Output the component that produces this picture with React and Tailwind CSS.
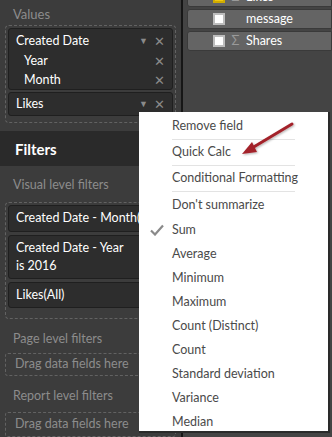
import React from "react";

const font = { fontFamily: 'Lato, "Noto Sans", sans-serif' };

function FieldRow({ label, checked, sigma }) {
  return (
    <div className="h-[20px] mb-[2px] flex items-center bg-[#646464] border border-[#3a3a3a] rounded-l-[3px]">
      <div className="w-[25px] shrink-0" />
      <div
        className={
          "w-[12px] h-[12px] shrink-0 border-2 " +
          (checked ? "bg-[#f2c80f] border-[#d0ac00]" : "bg-white border-[#bdbdbd]")
        }
      />
      <div className="w-[21px] shrink-0 text-center text-[13px] text-[#9a9a9a]">{sigma ? "Σ" : "\u00a0"}</div>
      <div className="text-[12.5px] text-white">{label}</div>
    </div>
  );
}

function Card({ children }) {
  return (
    <div className="bg-[#2d2d2d] border border-[#1f1f1f] rounded-[3px] px-[7px] text-[12.5px] text-white leading-[18px]">
      {children}
    </div>
  );
}

function Tools() {
  return (
    <div className="flex items-center gap-[6px] text-[#8a8a8a]">
      <span className="text-[9px]">▼</span>
      <span className="text-[13px] leading-none">✕</span>
    </div>
  );
}

const topItems = ["Remove field", "Quick Calc", "Conditional Formatting", "Don't summarize"];
const aggItems = [
  "Sum",
  "Average",
  "Minimum",
  "Maximum",
  "Count (Distinct)",
  "Count",
  "Standard deviation",
  "Variance",
  "Median",
];

export default function App() {
  return (
    <div className="relative w-[332px] h-[437px] overflow-hidden flex bg-[#444444]" style={font}>
      {/* Left pane */}
      <div className="w-[181px] h-full bg-[#3c3c3c] flex flex-col shrink-0">
        <div className="px-[13px] pt-[5px] h-[26px] text-[13px] text-[#8c8c8c]">Values</div>
        <div className="mx-[5px] border border-dashed border-[#626262] rounded-[4px] px-[2px] pt-[2px] pb-[6px] flex flex-col gap-[2px]">
          <Card>
            <div className="flex items-center justify-between h-[22px] pt-[2px]">
              <span>Created Date</span>
              <Tools />
            </div>
            <div className="flex items-center justify-between h-[19px] pl-[8px]">
              <span>Year</span>
              <span className="text-[13px] text-[#8a8a8a]">✕</span>
            </div>
            <div className="flex items-center justify-between h-[19px] pl-[8px]">
              <span>Month</span>
              <span className="text-[13px] text-[#8a8a8a]">✕</span>
            </div>
          </Card>
          <Card>
            <div className="flex items-center justify-between h-[22px]">
              <span>Likes</span>
              <Tools />
            </div>
          </Card>
        </div>
        <div className="mt-[8px] h-[36px] bg-[#2a2a2a] flex items-center px-[15px] text-[15px] font-bold text-white">
          Filters
        </div>
        <div className="px-[13px] pt-[10px] h-[36px] text-[12.5px] text-[#8c8c8c]">Visual level filters</div>
        <div className="mx-[5px] border border-dashed border-[#626262] rounded-[4px] px-[2px] pt-[2px] pb-[10px] flex flex-col gap-[3px]">
          <Card>
            <div className="h-[25px] flex items-center whitespace-nowrap">Created Date - Month(All)</div>
          </Card>
          <Card>
            <div className="py-[3px] leading-[18px]">
              Created Date - Year
              <br />
              is 2016
            </div>
          </Card>
          <Card>
            <div className="h-[24px] flex items-center">Likes(All)</div>
          </Card>
        </div>
        <div className="px-[13px] pt-[11px] h-[35px] text-[12.5px] text-[#8c8c8c]">Page level filters</div>
        <div className="mx-[5px] h-[24px] border border-dashed border-[#626262] rounded-[3px] px-[9px] flex items-center text-[12.5px] text-[#8c8c8c]">
          Drag data fields here
        </div>
        <div className="px-[13px] pt-[11px] h-[36px] text-[12.5px] text-[#8c8c8c]">Report level filters</div>
        <div className="mx-[5px] h-[26px] border border-dashed border-[#626262] rounded-[3px] px-[9px] flex items-center text-[12.5px] text-[#8c8c8c]">
          Drag data fields here
        </div>
      </div>
      <div className="w-[2px] h-full bg-[#161616] shrink-0" />

      {/* Right pane */}
      <div className="flex-1 pl-[4px] mt-[-13px]">
        <FieldRow label="Likes" checked sigma />
        <FieldRow label="message" />
        <FieldRow label="Shares" sigma />
      </div>

      {/* Context menu */}
      <div className="absolute left-[139px] top-[112px] w-[189px] h-[319px] bg-white shadow-[1px_1px_0_1px_#2a2a2a] text-[12.5px] text-[#4a4a4a]">
        <div className="pt-[2px]">
          {topItems.map((t, i) => (
            <div
              key={t}
              className={
                "mx-[33px] h-[26px] flex items-center whitespace-nowrap " +
                (i < 3 ? "border-b border-[#e3e3e3]" : "")
              }
            >
              <span>{t}</span>
            </div>
          ))}
        </div>
        {aggItems.map((t) => (
          <div key={t} className="h-[24px] flex items-center relative pl-[33px]">
            {t === "Sum" && (
              <svg className="absolute left-[11px] top-[6px]" width="14" height="12" viewBox="0 0 14 12">
                <path d="M1 6.5 L5 10.5 L13 1.5" fill="none" stroke="#8a8a8a" strokeWidth="2.2" />
              </svg>
            )}
            <span>{t}</span>
          </div>
        ))}
      </div>

      {/* Red arrow */}
      <svg className="absolute left-0 top-0" width="332" height="437" viewBox="0 0 332 437">
        <defs>
          <filter id="sh" x="-20%" y="-20%" width="140%" height="140%">
            <feDropShadow dx="1" dy="1" stdDeviation="1" floodColor="#000" floodOpacity="0.3" />
          </filter>
        </defs>
        <g filter="url(#sh)">
          <path d="M292 124 L252 148" stroke="#a3222a" strokeWidth="3" strokeLinecap="round" />
          <path d="M242 154 L252 142 L257 152 Z" fill="#a3222a" />
        </g>
      </svg>
    </div>
  );
}
